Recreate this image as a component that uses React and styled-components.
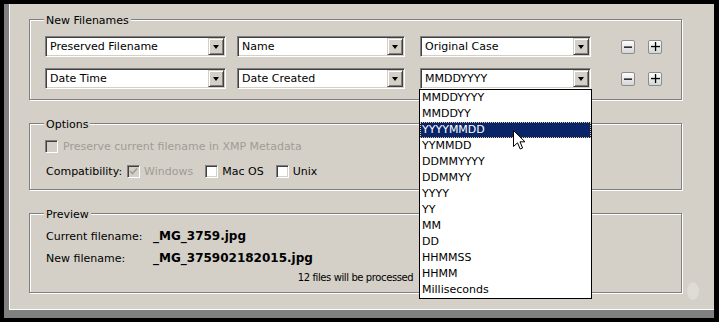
import React from "react";
import styled, { createGlobalStyle } from "styled-components";

const GlobalStyle = createGlobalStyle`
  html, body {
    margin: 0;
    padding: 0;
    background: #000;
  }
  body {
    font-family: "DejaVu Sans", Tahoma, sans-serif;
    font-size: 11px;
    color: #000;
  }
`;

const formats = [
  "MMDDYYYY",
  "MMDDYY",
  "YYYYMMDD",
  "YYMMDD",
  "DDMMYYYY",
  "DDMMYY",
  "YYYY",
  "YY",
  "MM",
  "DD",
  "HHMMSS",
  "HHMM",
  "Milliseconds",
];

const Window = styled.div`
  width: 710px;
  margin: 4px 0 0 4px;
  padding: 0 0 8px 5px;
  background: #808080;
  box-sizing: border-box;
`;

const Panel = styled.div`
  position: relative;
  height: 306px;
  box-sizing: border-box;
  background: #d4d0c8;
  border-left: 1px solid #fff;
  border-bottom: 1px solid #fff;
  padding: 15px 0 0 19px;
`;

const Group = styled.div`
  width: 653px;
  box-sizing: border-box;
  margin-top: ${(p) => p.$mt || 0}px;
  padding: 0 0 ${(p) => p.$pb}px 15px;
  border: 1px solid #808080;
  box-shadow: inset 1px 1px 0 #fff, 1px 1px 0 #fff;
`;

const Legend = styled.div`
  display: table;
  margin: -6px 0 0 -1px;
  padding: 0 2px;
  height: 14px;
  line-height: 14px;
  background: #d4d0c8;
`;

const Rows = styled.div`
  display: flex;
  flex-direction: column;
  gap: ${(p) => p.$gap}px;
  margin-top: ${(p) => p.$mt}px;
`;

const Row = styled.div`
  display: flex;
  align-items: center;
  height: ${(p) => p.$h || 16}px;
`;

const ComboBox = styled.div`
  position: relative;
  display: flex;
  width: ${(p) => p.$w}px;
  height: 21px;
  margin-left: ${(p) => p.$ml || 0}px;
  box-sizing: border-box;
  padding: 1px;
  background: #fff;
  border: 1px solid;
  border-color: #808080 #fff #fff #808080;
  box-shadow: inset 1px 1px 0 #404040, inset -1px -1px 0 #d4d0c8;
`;

const ComboText = styled.div`
  flex: 1;
  padding-left: 3px;
  line-height: 17px;
  white-space: nowrap;
`;

const DropButton = styled.div`
  width: 16px;
  height: 17px;
  box-sizing: border-box;
  background: #d4d0c8;
  border: 1px solid;
  border-color: #d4d0c8 #404040 #404040 #d4d0c8;
  box-shadow: inset 1px 1px 0 #fff, inset -1px -1px 0 #808080;
  display: flex;
  align-items: center;
  justify-content: center;

  &::after {
    content: "";
    width: 0;
    height: 0;
    border-left: 3.5px solid transparent;
    border-right: 3.5px solid transparent;
    border-top: 4px solid #000;
  }
`;

const MiniButton = styled.div`
  width: 14px;
  height: 14px;
  margin-left: ${(p) => p.$ml}px;
  box-sizing: border-box;
  border: 1px solid #8c8c8c;
  border-radius: 2px;
  background: linear-gradient(#fdfdfd, #d6d6d6);
  display: flex;
  align-items: center;
  justify-content: center;
`;

const List = styled.div`
  position: absolute;
  top: 20px;
  left: -2px;
  width: 173px;
  box-sizing: border-box;
  border: 1px solid #000;
  background: #fff;
  z-index: 2;
`;

const ListItem = styled.div`
  height: 16px;
  line-height: 14px;
  box-sizing: border-box;
  padding-left: 1px;
  border: 1px ${(p) => (p.$active ? "dotted #e8c880" : "solid transparent")};
  background: ${(p) => (p.$active ? "#0a246a" : "#fff")};
  color: ${(p) => (p.$active ? "#fff" : "#000")};
`;

const Cursor = styled.svg`
  position: absolute;
  left: 93px;
  top: 40px;
`;

const Check = styled.span`
  width: 13px;
  height: 13px;
  box-sizing: border-box;
  margin-left: ${(p) => p.$ml || 0}px;
  border: 1px solid;
  border-color: #808080 #fff #fff #808080;
  box-shadow: inset 1px 1px 0 #404040, inset -1px -1px 0 #d4d0c8;
  background: ${(p) => (p.$disabled ? "#d4d0c8" : "#fff")};
  display: flex;
  align-items: center;
  justify-content: center;
  flex: none;
`;

const Text = styled.span`
  margin-left: ${(p) => p.$ml || 0}px;
  color: ${(p) => (p.$disabled ? "#a09c94" : "#000")};
  white-space: nowrap;
`;

const InfoRow = styled.div`
  display: grid;
  grid-template-columns: 108px 1fr;
  align-items: center;
  height: 16px;
`;

const Value = styled.span`
  font-size: 12px;
  font-weight: bold;
`;

const Note = styled.div`
  margin: 4px 0 0 -15px;
  height: 16px;
  line-height: 16px;
  font-size: 10px;
  letter-spacing: -0.4px;
  text-align: center;
`;

const Watermark = styled.svg`
  position: absolute;
  right: 14px;
  bottom: 8px;
  opacity: 0.35;
`;

const Combo = ({ w, ml, value, children }) => (
  <ComboBox $w={w} $ml={ml}>
    <ComboText>{value}</ComboText>
    <DropButton />
    {children}
  </ComboBox>
);

const Minus = ({ ml }) => (
  <MiniButton $ml={ml}>
    <svg width="8" height="8" viewBox="0 0 8 8">
      <rect x="0" y="3.5" width="8" height="1.3" fill="#000" />
    </svg>
  </MiniButton>
);

const Plus = ({ ml }) => (
  <MiniButton $ml={ml}>
    <svg width="9" height="9" viewBox="0 0 9 9">
      <rect x="0" y="3.9" width="9" height="1.3" fill="#000" />
      <rect x="3.9" y="0" width="1.3" height="9" fill="#000" />
    </svg>
  </MiniButton>
);

const CheckMark = () => (
  <svg width="9" height="9" viewBox="0 0 9 9">
    <path d="M1 4 L3.5 6.5 L8 1.5" fill="none" stroke="#a09c94" strokeWidth="1.6" />
  </svg>
);

const App = () => {
  return (
    <>
      <GlobalStyle />
      <Window>
        <Panel>
          <Group $pb={10}>
            <Legend>New Filenames</Legend>
            <Rows $mt={8} $gap={11}>
              <Row $h={21}>
                <Combo w={181} value="Preserved Filename" />
                <Combo w={168} ml={11} value="Name" />
                <Combo w={171} ml={15} value="Original Case" />
                <Minus ml={30} />
                <Plus ml={13} />
              </Row>
              <Row $h={21}>
                <Combo w={181} value="Date Time" />
                <Combo w={168} ml={11} value="Date Created" />
                <Combo w={171} ml={15} value="MMDDYYYY">
                  <List>
                    {formats.map((f) => (
                      <ListItem key={f} $active={f === "YYYYMMDD"}>
                        {f}
                      </ListItem>
                    ))}
                    <Cursor width="13" height="20" viewBox="0 0 13 20">
                      <path
                        d="M0.5 0.5 V16.5 L4.5 12.8 L7.2 19 L9.6 18 L7 11.8 H12 Z"
                        fill="#fff"
                        stroke="#000"
                        strokeWidth="1"
                      />
                    </Cursor>
                  </List>
                </Combo>
                <Minus ml={30} />
                <Plus ml={13} />
              </Row>
            </Rows>
          </Group>

          <Group $mt={23} $pb={10}>
            <Legend>Options</Legend>
            <Rows $mt={6} $gap={9}>
              <Row>
                <Check $disabled />
                <Text $ml={5} $disabled>
                  Preserve current filename in XMP Metadata
                </Text>
              </Row>
              <Row>
                <Text $ml={1}>Compatibility:</Text>
                <Check $ml={5} $disabled>
                  <CheckMark />
                </Check>
                <Text $ml={4} $disabled>
                  Windows
                </Text>
                <Check $ml={12} />
                <Text $ml={4}>Mac OS</Text>
                <Check $ml={12} />
                <Text $ml={4}>Unix</Text>
              </Row>
            </Rows>
          </Group>

          <Group $mt={23} $pb={6}>
            <Legend>Preview</Legend>
            <Rows $mt={6} $gap={6}>
              <InfoRow>
                <Text $ml={1}>Current filename:</Text>
                <Value>_MG_3759.jpg</Value>
              </InfoRow>
              <InfoRow>
                <Text $ml={1}>New filename:</Text>
                <Value>_MG_375902182015.jpg</Value>
              </InfoRow>
            </Rows>
            <Note>12 files will be processed</Note>
          </Group>

          <Watermark width="14" height="20" viewBox="0 0 14 20">
            <ellipse cx="7" cy="10" rx="6" ry="9" fill="#f4f2ee" />
          </Watermark>
        </Panel>
      </Window>
    </>
  );
};

export default App;
